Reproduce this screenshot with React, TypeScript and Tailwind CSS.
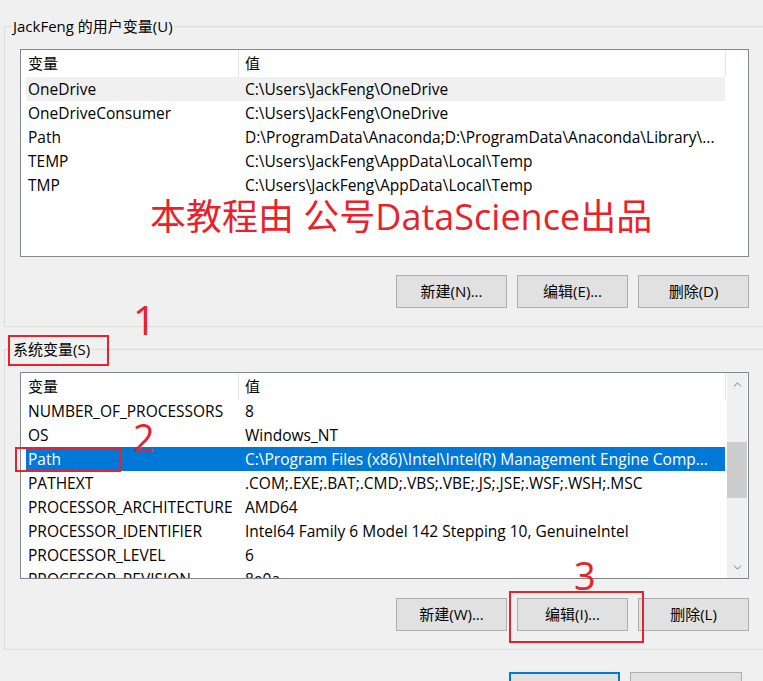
import { ChevronUp, ChevronDown } from 'lucide-react';

type Row = { name: string; value: string; selected?: boolean; hover?: boolean };

const userRows: Row[] = [
    { name: 'OneDrive', value: 'C:\\Users\\JackFeng\\OneDrive', hover: true },
    { name: 'OneDriveConsumer', value: 'C:\\Users\\JackFeng\\OneDrive' },
    { name: 'Path', value: 'D:\\ProgramData\\Anaconda;D:\\ProgramData\\Anaconda\\Library\\...' },
    { name: 'TEMP', value: 'C:\\Users\\JackFeng\\AppData\\Local\\Temp' },
    { name: 'TMP', value: 'C:\\Users\\JackFeng\\AppData\\Local\\Temp' },
];

const systemRows: Row[] = [
    { name: 'NUMBER_OF_PROCESSORS', value: '8' },
    { name: 'OS', value: 'Windows_NT' },
    { name: 'Path', value: 'C:\\Program Files (x86)\\Intel\\Intel(R) Management Engine Comp...', selected: true },
    { name: 'PATHEXT', value: '.COM;.EXE;.BAT;.CMD;.VBS;.VBE;.JS;.JSE;.WSF;.WSH;.MSC' },
    { name: 'PROCESSOR_ARCHITECTURE', value: 'AMD64' },
    { name: 'PROCESSOR_IDENTIFIER', value: 'Intel64 Family 6 Model 142 Stepping 10, GenuineIntel' },
    { name: 'PROCESSOR_LEVEL', value: '6' },
    { name: 'PROCESSOR_REVISION', value: '8e0a' },
];

function Header() {
    return (
        <div className="flex h-[27px] w-[705px] shrink-0 items-center bg-white">
            <div className="flex h-full w-[218px] items-center border-r border-[#e5e5e5] pl-[7px]">变量</div>
            <div className="flex h-full flex-1 items-center border-r border-[#e5e5e5] pl-[6px]">值</div>
        </div>
    );
}

function Rows({ rows }: { rows: Row[] }) {
    return (
        <div className="ml-[5px] flex w-[699px] flex-col text-[15.5px]">
            {rows.map((r) => (
                <div
                    key={r.name}
                    className={`flex h-[24px] shrink-0 items-center whitespace-nowrap pt-[2px] ${r.selected ? 'bg-[#0078d7] text-white' : r.hover ? 'bg-[#f0f0f0]' : ''}`}
                >
                    <div className="w-[217px] shrink-0 overflow-hidden pl-[2px]">{r.name}</div>
                    <div className="flex-1 overflow-hidden pl-[2px]">{r.value}</div>
                </div>
            ))}
        </div>
    );
}

function Buttons({ labels }: { labels: string[] }) {
    return (
        <div className="flex justify-end gap-[10px]">
            {labels.map((l) => (
                <div
                    key={l}
                    className="flex h-[33px] w-[111px] items-center justify-center border border-[#adadad] bg-[#e1e1e1]"
                >
                    {l}
                </div>
            ))}
        </div>
    );
}

function Group({ title, children }: { title: string; children: React.ReactNode }) {
    return (
        <div className="relative ml-[4px] h-[301px] w-[800px] border border-[#dcdcdc] pl-[15px] pt-[22px]">
            <div className="absolute -top-[11px] left-[7px] h-[20px] bg-[#f0f0f0] px-[1px] leading-[20px]">{title}</div>
            {children}
        </div>
    );
}

export default function App() {
    return (
        <div
            className="relative h-[681px] w-[763px] overflow-hidden bg-[#f0f0f0] text-[15px] text-black"
            style={{ fontFamily: '"Open Sans", "Noto Sans CJK SC", sans-serif' }}
        >
            <div className="pt-[26px]">
                {/* User variables */}
                <Group title="JackFeng 的用户变量(U)">
                    <div className="w-[729px]">
                        <div className="flex h-[208px] flex-col overflow-hidden border border-[#828790] bg-white">
                            <Header />
                            <Rows rows={userRows} />
                        </div>
                        <div className="mt-[18px]">
                            <Buttons labels={['新建(N)...', '编辑(E)...', '删除(D)']} />
                        </div>
                    </div>
                </Group>

                {/* System variables */}
                <div className="mt-[22px]">
                    <Group title="系统变量(S)">
                        <div className="w-[729px]">
                            <div className="flex h-[207px] overflow-hidden border border-[#828790] bg-white">
                                <div className="flex flex-1 flex-col overflow-hidden">
                                    <div className="-mb-[1px]">
                                        <Header />
                                    </div>
                                    <Rows rows={systemRows} />
                                </div>
                                <div className="mr-[1px] flex w-[20px] shrink-0 flex-col bg-[#f0f0f0]">
                                    <div className="flex h-[22px] items-center justify-center text-[#606060]">
                                        <ChevronUp size={13} strokeWidth={1.5} />
                                    </div>
                                    <div className="mt-[47px] h-[56px] bg-[#cdcdcd]" />
                                    <div className="flex-1" />
                                    <div className="flex h-[22px] items-center justify-center text-[#606060]">
                                        <ChevronDown size={13} strokeWidth={1.5} />
                                    </div>
                                </div>
                            </div>
                            <div className="mt-[19px]">
                                <Buttons labels={['新建(W)...', '编辑(I)...', '删除(L)']} />
                            </div>
                        </div>
                    </Group>
                </div>

                {/* Dialog buttons */}
                <div className="mr-[21px] mt-[22px] flex justify-end gap-[10px]">
                    <div className="h-[40px] w-[111px] border-2 border-[#0078d7] bg-[#e1e1e1]" />
                    <div className="h-[40px] w-[112px] border border-[#adadad] bg-[#e1e1e1]" />
                </div>
            </div>

            {/* Annotations drawn over the screenshot */}
            <div className="absolute left-[150px] top-[199px] text-[36px] leading-none text-[#e8222b]">
                本教程由 公号DataScience出品
            </div>
            <div className="absolute left-[8px] top-[335px] h-[31px] w-[101px] border-2 border-[#e8222b]" />
            <div className="absolute left-[15px] top-[447px] h-[25px] w-[106px] border-2 border-[#e8222b]" />
            <div className="absolute left-[509px] top-[591px] h-[52px] w-[135px] border-2 border-[#e8222b]" />
            <div className="absolute left-[133px] top-[300px] text-[40px] leading-none text-[#e8222b]">1</div>
            <div className="absolute left-[133px] top-[418px] text-[38px] leading-none text-[#e8222b]">2</div>
            <div className="absolute left-[574px] top-[556px] text-[38px] leading-none text-[#e8222b]">3</div>
        </div>
    );
}
